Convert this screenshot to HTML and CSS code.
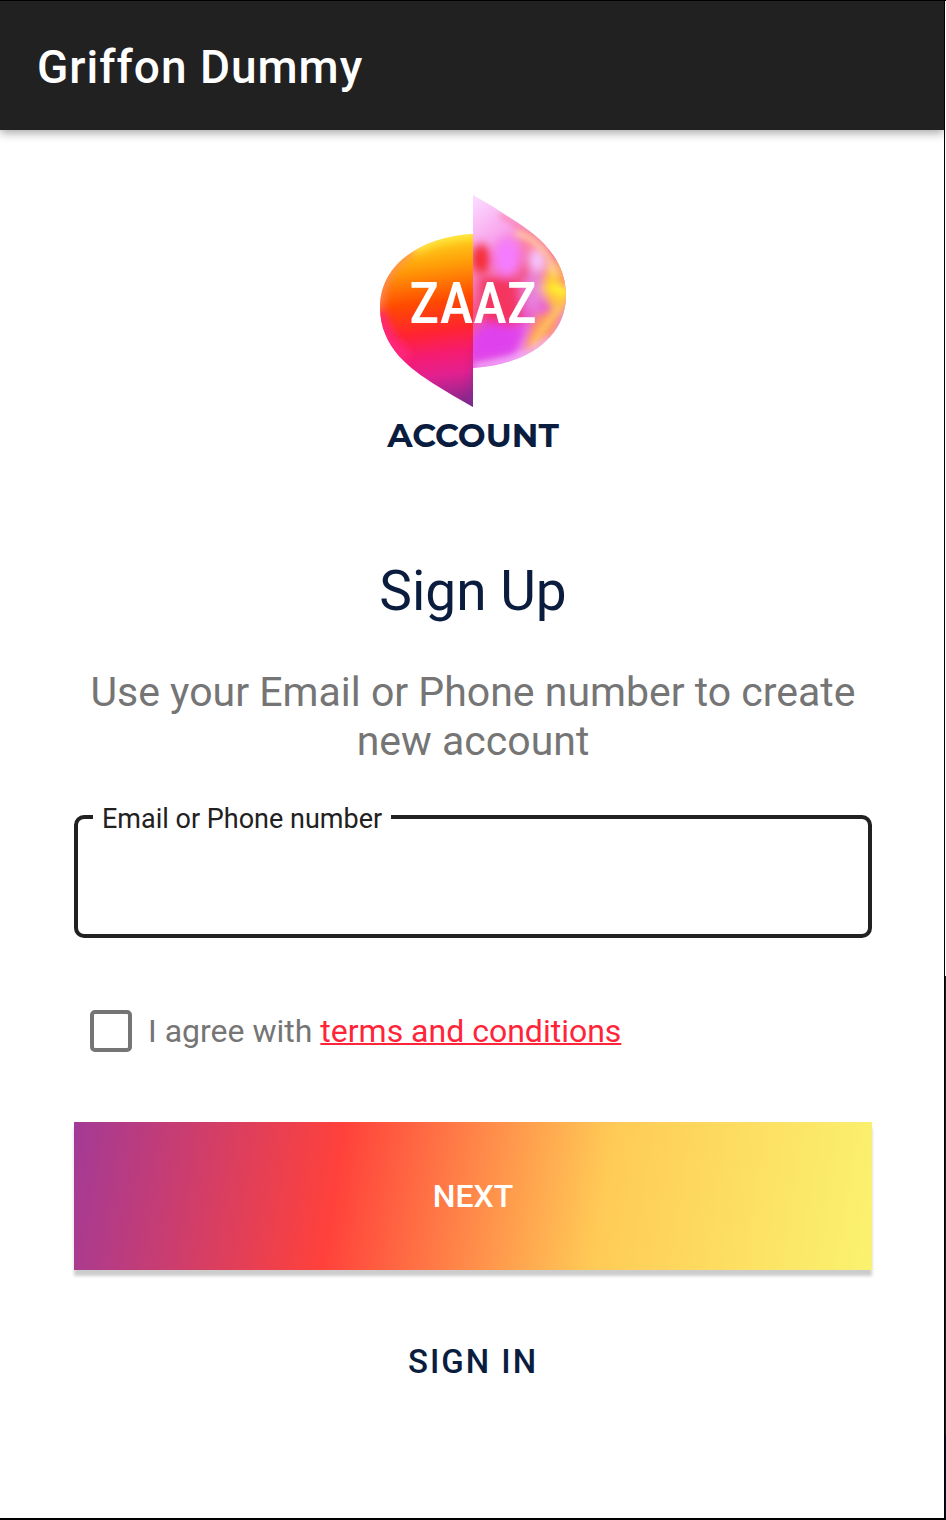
FILE: index.html
```html
<!DOCTYPE html>
<html lang="en">
<head>
<meta charset="utf-8">
<meta name="viewport" content="width=device-width, initial-scale=1">
<title>Griffon Dummy</title>
<link rel="stylesheet" href="styles.css">
</head>
<body>
<div class="screen">
  <header class="app-bar"><h1 class="app-title">Griffon Dummy</h1></header>
  <main class="content">
    <div class="brand">
      <svg class="brand-mark" viewBox="0 0 186 213" role="img" aria-label="ZAAZ">
        <defs>
          <clipPath id="leftShape"><path d="M93 39C40 42 0 70 0 112C0 153 32 175 54 189Q73 201 93 212Z"/></clipPath>
          <clipPath id="rightShape"><path d="M93 0Q113 11 132 24C154 38 186 60 186 101C186 143 146 170 93 173Z"/></clipPath>
          <linearGradient id="warm" gradientUnits="userSpaceOnUse" x1="62" y1="38" x2="86" y2="212">
            <stop offset="0" stop-color="#ffdc20"/><stop offset="0.18" stop-color="#ff9d08"/>
            <stop offset="0.38" stop-color="#ff4a00"/><stop offset="0.55" stop-color="#ff2430"/>
            <stop offset="0.68" stop-color="#f51b70"/><stop offset="0.8" stop-color="#e3208f"/>
            <stop offset="1" stop-color="#76298c"/>
          </linearGradient>
          <linearGradient id="pearl" x1="0.1" y1="0" x2="0.5" y2="1">
            <stop offset="0" stop-color="#fbd9ff"/><stop offset="0.25" stop-color="#f9a5ed"/>
            <stop offset="0.55" stop-color="#f3558b"/><stop offset="0.8" stop-color="#e65adf"/>
            <stop offset="1" stop-color="#f0a4ff"/>
          </linearGradient>
          <filter id="soft" x="-50%" y="-50%" width="200%" height="200%"><feGaussianBlur stdDeviation="5"/></filter>
          <filter id="fine" x="-50%" y="-50%" width="200%" height="200%"><feGaussianBlur stdDeviation="3"/></filter>
        </defs>
        <g clip-path="url(#leftShape)">
          <rect width="94" height="213" fill="url(#warm)"/>
          <g filter="url(#soft)">
            <path d="M-5 112C-5 72 25 48 60 36" fill="none" stroke="#ff8a68" stroke-width="15"/>
            <path d="M34 54Q58 38 96 38" fill="none" stroke="#fff050" stroke-width="9"/>
            <path d="M-3 116C2 142 14 154 26 164" fill="none" stroke="#ff287e" stroke-width="16"/>
            <path d="M99 140L99 218L90 212Z" fill="#7d2990"/>
          </g>
        </g>
        <g clip-path="url(#rightShape)">
          <rect x="93" width="93" height="174" fill="url(#pearl)"/>
          <g filter="url(#soft)">
            <ellipse cx="101" cy="64" rx="10" ry="15" fill="#f52f37"/>
            <ellipse cx="127" cy="62" rx="13" ry="19" fill="#f57cff"/>
            <path d="M136 34L166 53L171 74L151 60Z" fill="#ff8492"/>
            <path d="M99 83L134 83L142 126L106 139Z" fill="#f43460"/>
            <path d="M90 148Q100 125 116 128L145 135L134 160L90 166Z" fill="#df42ed"/>
            <ellipse cx="153" cy="97" rx="9" ry="20" fill="#e783dc"/>
            <path d="M168 69L187 61L191 111L174 117L160 94Z" fill="#ffc93c"/>
            <path d="M142 161L155 120L182 115L174 141Z" fill="#ff995c"/>
            <ellipse cx="157" cy="66" rx="9" ry="12" fill="#f4c4ff"/>
          </g>
          <g fill="none" filter="url(#fine)">
            <path d="M120 20Q184 54 184 96" stroke="#fc6d84" stroke-width="3"/>
            <path d="M136 38Q165 45 176 80" stroke="#ffd5a8" stroke-width="5"/>
            <path d="M170 91Q178 96 188 98" stroke="#fff02f" stroke-width="8"/>
            <path d="M181 112Q165 129 152 151" stroke="#ffcb63" stroke-width="5"/>
            <path d="M94 171Q142 167 170 143" stroke="#f7b9fb" stroke-width="4"/>
          </g>
        </g>
        <text class="brand-letters" x="93" y="128" text-anchor="middle">ZAAZ</text>
      </svg>
      <p class="brand-name">ACCOUNT</p>
    </div>
    <h2 class="heading">Sign Up</h2>
    <p class="intro">Use your Email or Phone number to create new account</p>
    <form class="form">
      <fieldset class="field">
        <legend class="field-legend"><label for="identity">Email or Phone number</label></legend>
        <input class="field-input" id="identity" type="text">
      </fieldset>
      <div class="agreement">
        <input class="tick" id="agree" type="checkbox">
        <label for="agree">I agree with <a class="terms" href="#terms">terms and conditions</a></label>
      </div>
      <button class="next" type="submit">NEXT</button>
      <button class="sign-in" type="button">SIGN IN</button>
    </form>
  </main>
</div>
<div class="edge"></div>
</body>
</html>
```
FILE: styles.css
```css
* { box-sizing: border-box; }
body {
  display: grid;
  grid-template-columns: 1fr 2px;
  min-height: 100vh;
  margin: 0;
  border-top: 1px solid #000;
  border-bottom: 2px solid #000;
  background: #fff;
  color: #757575;
  font-family: Roboto, "Liberation Sans", sans-serif;
}
.edge {
  background:
    linear-gradient(#000, #000) 0 0 / 1px 100% no-repeat,
    linear-gradient(#fff 0 64.3%, #1c1c1c 64.3% 94.5%, #000d26 94.5%);
}
.app-bar {
  padding: 38px 37px 34px;
  background: #212121;
  box-shadow: 0 3px 9px rgba(0, 0, 0, .35);
}
.app-title {
  margin: 0;
  color: #fff;
  font-size: 46px;
  font-weight: 500;
  line-height: 57px;
  letter-spacing: 1px;
}
.content { padding: 65px 72px 76px 74px; }
.brand { text-align: center; }
.brand-mark { display: block; width: 186px; height: 213px; margin: 0 auto; }
.brand-letters {
  fill: #fff;
  font-family: "Roboto Condensed", "Liberation Sans Narrow", "Liberation Sans", sans-serif;
  font-size: 57px;
  font-weight: 500;
}
.brand-name {
  margin: 6px 0 0;
  color: #0b1d3f;
  font-family: Montserrat, Inter, sans-serif;
  font-size: 33px;
  font-weight: 700;
  line-height: 42px;
}
.heading {
  margin: 102px 0 0;
  color: #0b1d3f;
  font-size: 55px;
  font-weight: 400;
  line-height: 66px;
  text-align: center;
}
.intro {
  margin: 44px 0 0;
  font-size: 41px;
  line-height: 49px;
  text-align: center;
}
.form { display: flex; flex-direction: column; margin-top: 33px; }
.field {
  min-width: 0;
  margin: 0;
  padding: 0 15px;
  border: 4px solid #212121;
  border-radius: 10px;
}
.field-legend {
  padding: 4px 9px 0;
  color: #212121;
  font-size: 27px;
  line-height: 32px;
}
.field-input {
  display: block;
  width: 100%;
  height: 99px;
  padding: 0 9px;
  border: 0;
  outline: 0;
  background: transparent;
  color: #212121;
  font: inherit;
  font-size: 41px;
}
.agreement {
  display: flex;
  align-items: center;
  gap: 16px;
  margin: 71px 16px 0;
  font-size: 32px;
  line-height: 44px;
}
.tick {
  appearance: none;
  width: 42px;
  height: 42px;
  margin: 0;
  border: 4px solid #757575;
  border-radius: 5px;
}
.tick:checked { background: #757575; }
.terms { color: #ff2438; text-decoration-thickness: 2px; }
.next {
  margin-top: 69px;
  padding: 54px 16px;
  border: 0;
  background: linear-gradient(99deg, #a33a96, #ff413b 33%, #ffcb56 66%, #faf36f);
  box-shadow: 0 6px 3px rgba(0, 0, 0, .2);
  color: #fff;
  font: 500 32px/40px Roboto, "Liberation Sans", sans-serif;
}
.sign-in {
  align-self: center;
  margin-top: 72px;
  padding: 0;
  border: 0;
  background: transparent;
  color: #0b1d3f;
  font: 500 33px/40px Roboto, "Liberation Sans", sans-serif;
  letter-spacing: 2px;
}
```
